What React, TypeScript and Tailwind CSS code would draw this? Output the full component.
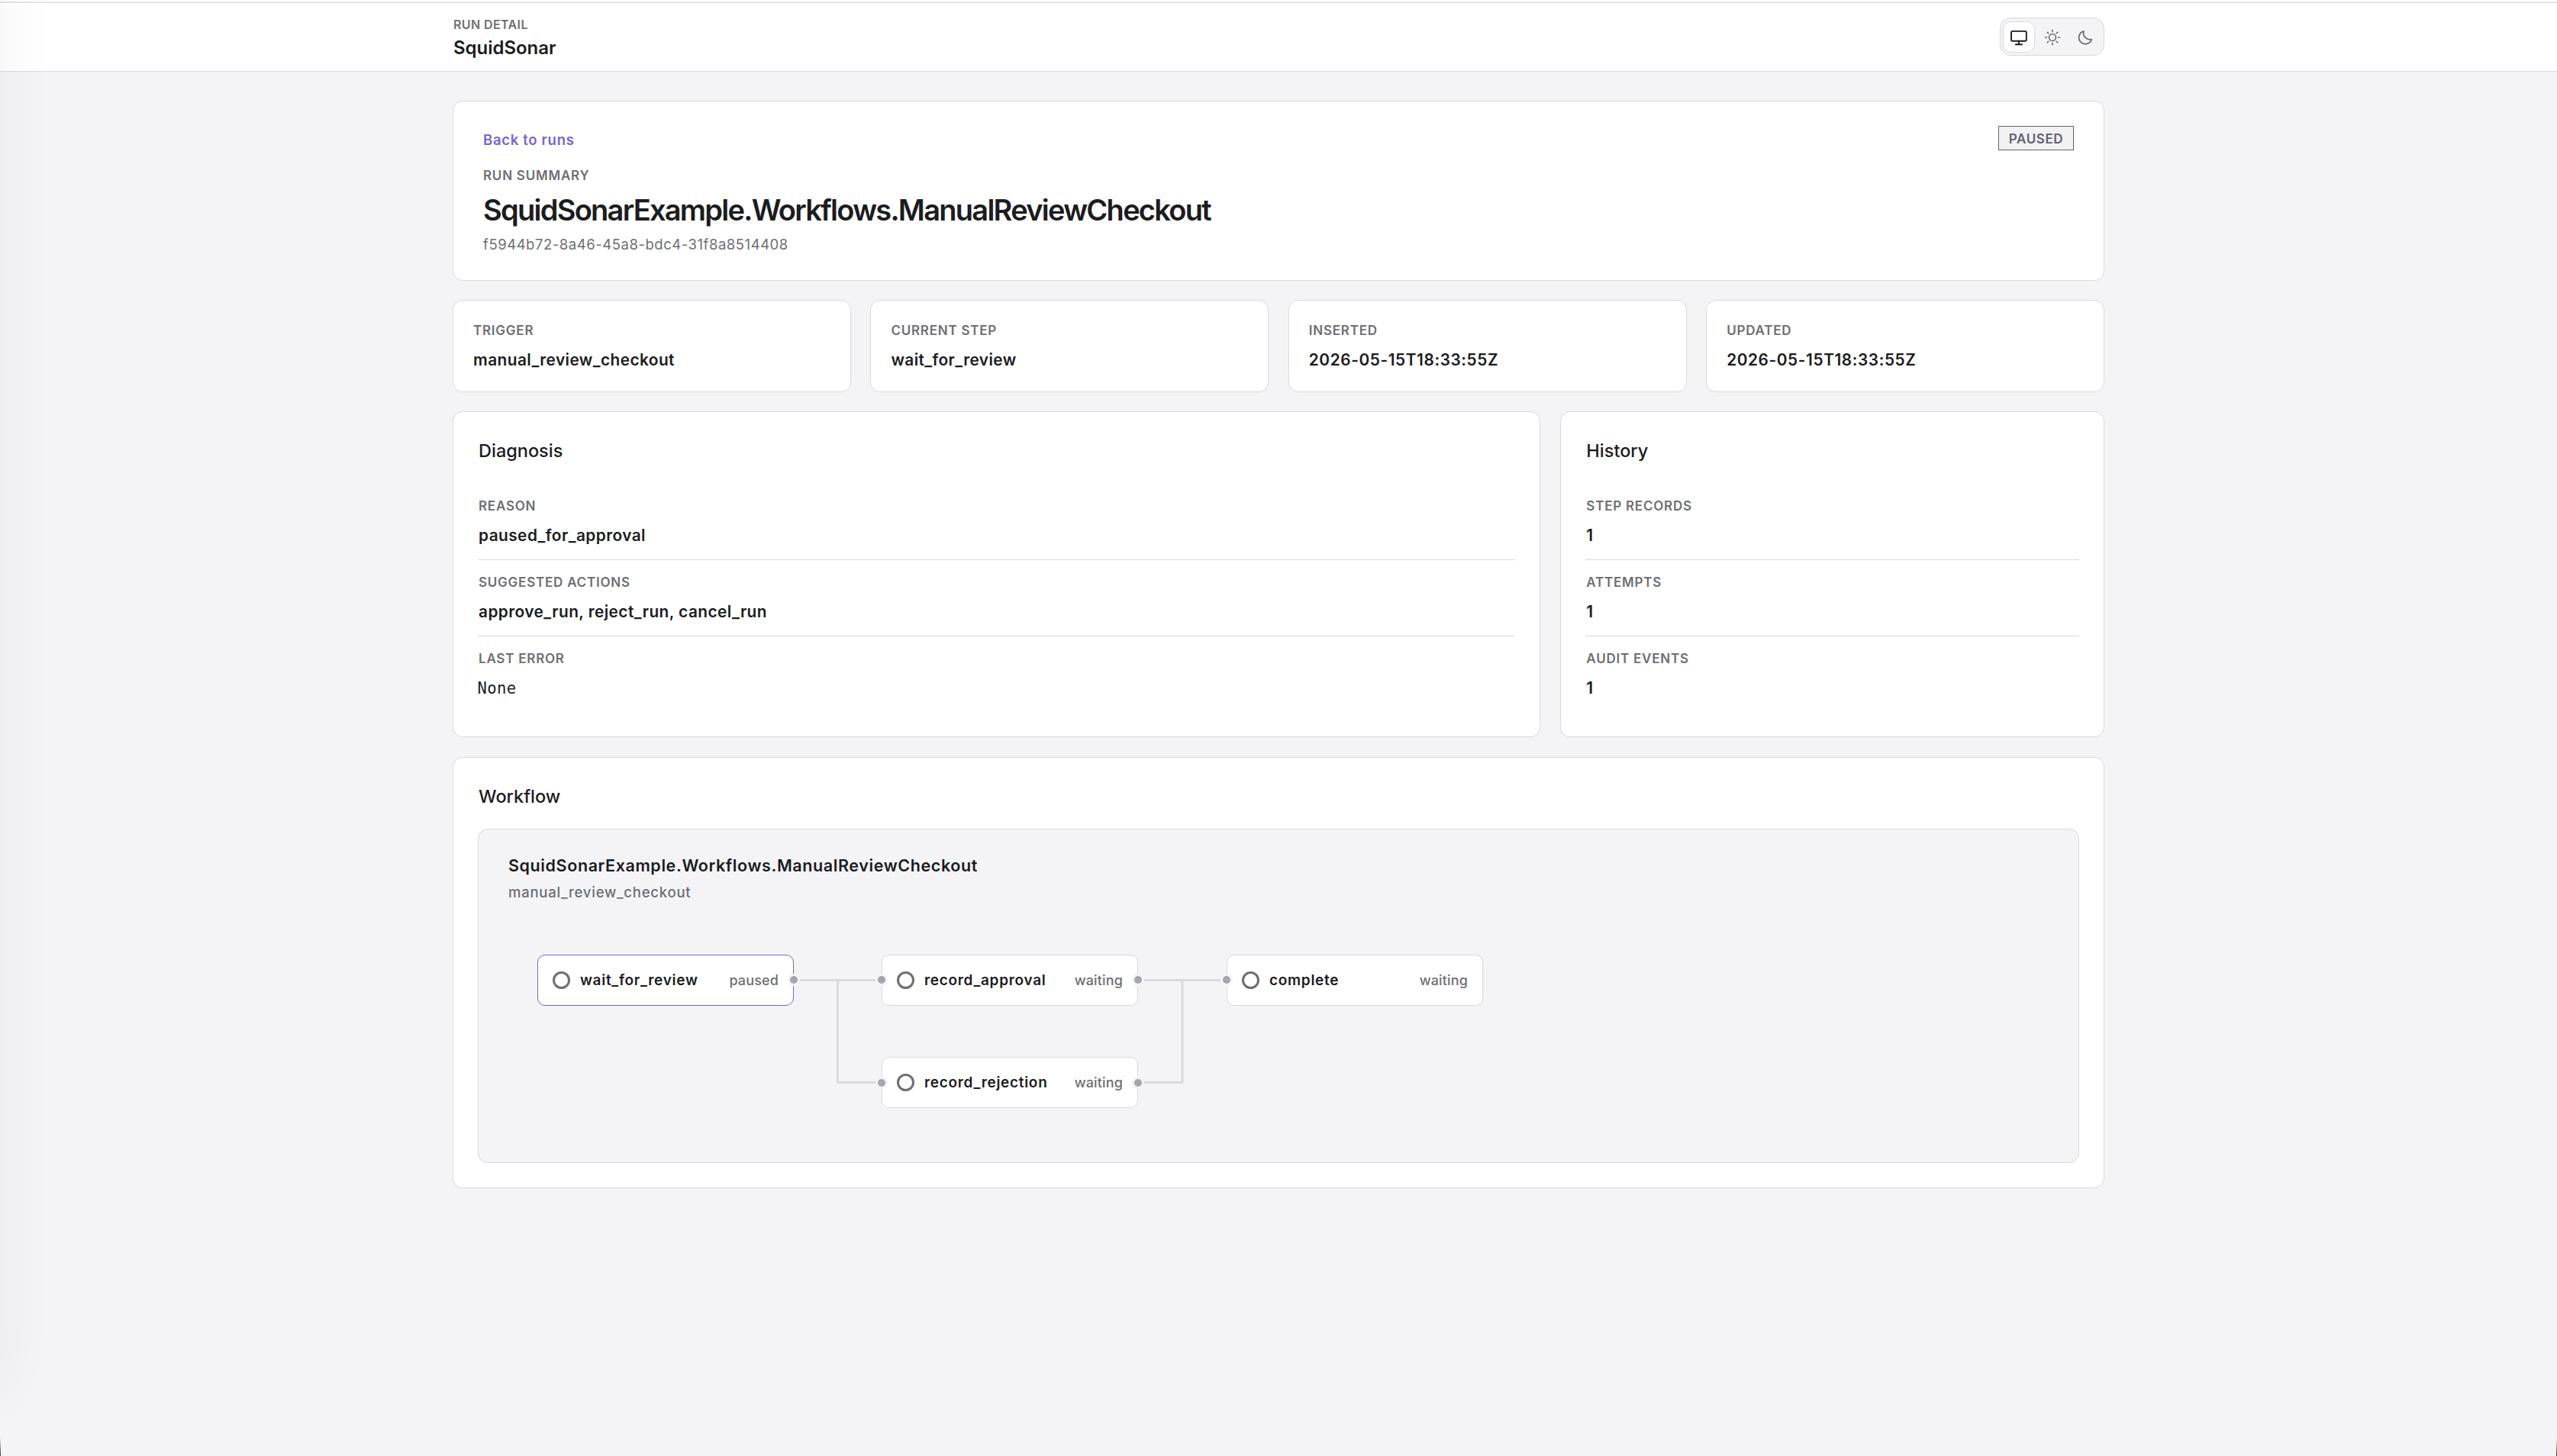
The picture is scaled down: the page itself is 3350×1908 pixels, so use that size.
import { useState } from "react";
import type { ReactNode } from "react";
import clsx from "clsx";

const WORKFLOW = "SquidSonarExample.Workflows.ManualReviewCheckout";

const facts = [
  { label: "Trigger", value: "manual_review_checkout" },
  { label: "Current step", value: "wait_for_review" },
  { label: "Inserted", value: "2026-05-15T18:33:55Z", stamp: true },
  { label: "Updated", value: "2026-05-15T18:33:55Z", stamp: true },
];

const nodes = [
  { name: "wait_for_review", status: "paused", x: 39, y: 32 },
  { name: "record_approval", status: "waiting", x: 490, y: 32 },
  { name: "record_rejection", status: "waiting", x: 490, y: 166 },
  { name: "complete", status: "waiting", x: 942, y: 32 },
];

const edges = [
  "M375 65.5H490",
  "M432.5 65.5V199.5H490",
  "M826 65.5H942",
  "M826 199.5H884V65.5",
];

const ports = [
  [375, 65],
  [490, 65],
  [490, 200],
  [826, 65],
  [826, 200],
  [942, 65],
];

function MonitorIcon() {
  return (
    <svg width="24" height="24" viewBox="0 0 24 24" fill="none" stroke="currentColor" strokeWidth="1.9" strokeLinecap="round" strokeLinejoin="round">
      <rect x="2" y="3.9" width="19.8" height="12.8" rx="1.8" />
      <path d="M11.9 16.7v4.4M7.8 21.2h8.3" />
    </svg>
  );
}

function SunIcon() {
  return (
    <svg width="24" height="24" viewBox="0 0 24 24" fill="none" stroke="currentColor" strokeWidth="1.7" strokeLinecap="round">
      <circle cx="12" cy="12" r="4.5" />
      <path d="M12 2.5v1.9M12 19.6v1.9M2.5 12h1.9M19.6 12h1.9M5.4 5.4l1.2 1.2M17.4 17.4l1.2 1.2M5.4 18.6l1.2-1.2M17.4 6.6l1.2-1.2" />
    </svg>
  );
}

function MoonIcon() {
  return (
    <svg width="24" height="24" viewBox="0 0 24 24" fill="none" stroke="currentColor" strokeWidth="1.8" strokeLinejoin="round">
      <path d="M20.3 14.5A8.5 8.5 0 1 1 9.9 3.9 8.6 8.6 0 0 0 20.3 14.5Z" />
    </svg>
  );
}

const themes = [
  { id: "system", icon: <MonitorIcon /> },
  { id: "light", icon: <SunIcon /> },
  { id: "dark", icon: <MoonIcon /> },
];

function ThemeToggle() {
  const [theme, setTheme] = useState("system");

  return (
    <div className="flex h-[50px] w-[137px] items-start gap-[1.5px] rounded-[14px] border border-[#d9d9df] bg-[#f4f4f7] px-[3px] pt-1">
      {themes.map((t) => (
        <button
          key={t.id}
          type="button"
          onClick={() => setTheme(t.id)}
          className={clsx(
            "flex h-[41px] w-[42px] shrink-0 items-center justify-center rounded-[11px] border",
            theme === t.id
              ? "border-[#d9d9df] bg-white text-[#1c1c1e]"
              : "border-transparent text-[#6e6e73]"
          )}
        >
          {t.icon}
        </button>
      ))}
    </div>
  );
}

function Card({ className, children }: { className?: string; children: ReactNode }) {
  return (
    <section className={clsx("rounded-[13px] border border-[#d9d9df] bg-white", className)}>
      {children}
    </section>
  );
}

function Label({ children }: { children: ReactNode }) {
  return (
    <div className="text-[17px] leading-[22px] font-semibold tracking-[0.77px] text-[#6e6e73] uppercase">
      {children}
    </div>
  );
}

function Heading({ children }: { children: ReactNode }) {
  return <h2 className="pl-px text-[23.5px] leading-[30px] font-medium">{children}</h2>;
}

function Detail({ label, mono, children }: { label: string; mono?: boolean; children: ReactNode }) {
  return (
    <div className="h-[100px] border-b border-[#d9d9df] pt-[18px] pl-px last:border-b-0">
      <Label>{label}</Label>
      {mono ? (
        <div className="mt-3.5 -ml-[1.5px] font-['DejaVu_Sans_Mono',monospace] text-[20.5px] leading-7 tracking-[0.4px]">
          {children}
        </div>
      ) : (
        <div className="mt-3.5 text-[20.8px] leading-7 font-semibold tracking-[0.46px]">{children}</div>
      )}
    </div>
  );
}

function Graph() {
  return (
    <div className="relative mt-[38px] h-[260px] w-[1320px]">
      <svg className="absolute inset-0" width="1320" height="260" fill="none">
        {edges.map((d) => (
          <path key={d} d={d} stroke="#d9d9df" strokeWidth="3" strokeLinejoin="round" />
        ))}
      </svg>
      {nodes.map((n) => (
        <div
          key={n.name}
          style={{ left: n.x, top: n.y }}
          className={clsx(
            "absolute flex h-[67px] w-[336px] items-center rounded-[10px] border bg-white pr-[19px] pl-[18.7px]",
            n.status === "paused" ? "border-[#7a63d1]" : "border-[#d9d9df]"
          )}
        >
          <span className="size-[23px] shrink-0 rounded-full border-3 border-[#6e6e73]" />
          <span className="ml-[13.3px] text-[19px] leading-6 font-semibold tracking-[0.7px]">{n.name}</span>
          <span className="ml-auto text-[18px] leading-6 font-medium tracking-[0.14px] text-[#6e6e73]">
            {n.status}
          </span>
        </div>
      ))}
      <svg className="absolute inset-0" width="1320" height="260">
        {ports.map(([x, y]) => (
          <circle key={`${x}-${y}`} cx={x} cy={y} r="6.5" fill="#a5a5ae" stroke="#f4f4f7" strokeWidth="3" />
        ))}
      </svg>
    </div>
  );
}

export default function App() {
  return (
    <div className="relative h-[1908px] overflow-hidden bg-[#f4f4f7] font-['Inter',sans-serif] text-[#1c1c1e]">
      <header className="h-[94px] border-b border-[#d9d9df] bg-white pt-0.5">
        <div className="h-0.5 bg-[#e3e3ea]" />
        <div className="mx-auto flex w-[2164px] justify-between">
          <div className="pt-[18px] pl-px">
            <div className="text-[16px] leading-5 font-semibold tracking-[0.39px] text-[#6e6e73] uppercase">
              Run detail
            </div>
            <div className="mt-[7px] text-[24px] leading-7 font-semibold tracking-[-0.03px]">SquidSonar</div>
          </div>
          <div className="pt-[19px]">
            <ThemeToggle />
          </div>
        </div>
      </header>

      <main className="mx-auto flex w-[2164px] flex-col pt-[38px]">
        <Card className="flex h-[236px] items-start justify-between pt-8 pr-[39px] pl-[39px]">
          <div className="pt-1.5">
            <a href="#" className="block text-[18.5px] leading-6 font-semibold tracking-[0.69px] text-[#7a63d1]">
              Back to runs
            </a>
            <div className="mt-6">
              <Label>Run summary</Label>
            </div>
            <h1 className="mt-[11px] text-[38px] leading-[46px] font-semibold tracking-[-1.73px]">{WORKFLOW}</h1>
            <p className="mt-2.5 text-[18.5px] leading-6 tracking-[0.53px] text-[#6e6e73]">
              f5944b72-8a46-45a8-bdc4-31f8a8514408
            </p>
          </div>
          <span className="flex h-8 w-[99px] items-center justify-center border border-[#65616e] bg-[#f1f2f4] pt-px text-[17px] leading-[22px] font-semibold tracking-[0.62px] text-[#65616e]">
            PAUSED
          </span>
        </Card>

        <div className="mt-[25px] grid grid-cols-4 gap-[25.6px]">
          {facts.map((f) => (
            <Card key={f.label} className="h-[121px] px-[26px] pt-7">
              <Label>{f.label}</Label>
              <div
                className={clsx(
                  "mt-3.5 text-[20.8px] leading-7 font-semibold",
                  f.stamp ? "tracking-[0.6px]" : "tracking-[0.44px]"
                )}
              >
                {f.value}
              </div>
            </Card>
          ))}
        </div>

        <div className="mt-[25px] grid grid-cols-[2fr_1fr] gap-[26px]">
          <Card className="h-[427px] px-8 pt-9">
            <Heading>Diagnosis</Heading>
            <div className="mt-7">
              <Detail label="Reason">paused_for_approval</Detail>
              <Detail label="Suggested actions">approve_run, reject_run, cancel_run</Detail>
              <Detail label="Last error" mono>
                None
              </Detail>
            </div>
          </Card>
          <Card className="h-[427px] px-8 pt-9">
            <Heading>History</Heading>
            <div className="mt-7">
              <Detail label="Step records">1</Detail>
              <Detail label="Attempts">1</Detail>
              <Detail label="Audit events">1</Detail>
            </div>
          </Card>
        </div>

        <Card className="mt-[26px] h-[565px] px-8 pt-9">
          <Heading>Workflow</Heading>
          <div className="mt-[27px] h-[438px] rounded-[13px] border border-[#d9d9df] bg-[#f4f4f7] px-[38px] pt-[33px]">
            <div className="pl-px text-[21.5px] leading-7 font-semibold tracking-[0.6px]">{WORKFLOW}</div>
            <div className="mt-[9px] pl-px text-[18.5px] leading-6 font-medium tracking-[0.76px] text-[#6e6e73]">
              manual_review_checkout
            </div>
            <Graph />
          </div>
        </Card>
      </main>

      {/* shade cast in from the left edge */}
      <div className="pointer-events-none absolute -top-40 bottom-[88px] -left-40 w-40 shadow-[0_0_80px_rgba(0,0,0,0.05)]" />
      <div className="absolute bottom-0 left-0 h-6 w-px bg-linear-to-b from-transparent to-[#3a302a]" />
      <div className="absolute right-0 bottom-0 h-6 w-px bg-linear-to-b from-transparent to-[#3a302a]" />
    </div>
  );
}
